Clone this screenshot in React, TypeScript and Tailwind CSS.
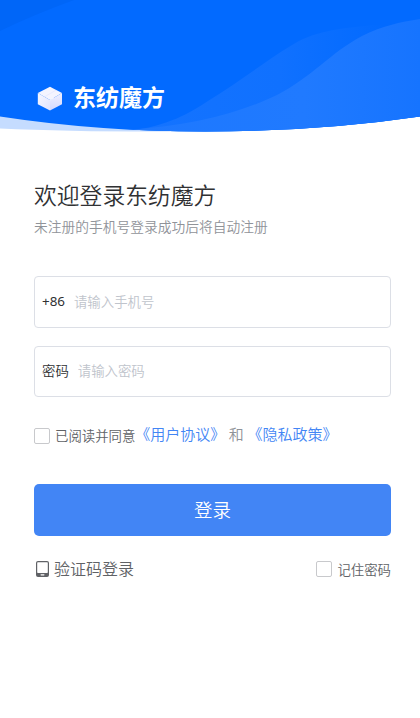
import React, { useState } from 'react';

interface CheckboxProps {
  checked: boolean;
  onChange: (checked: boolean) => void;
  label: string;
}

/**
 * Small square checkbox, the visible label is rendered by the parent.
 */
const Checkbox: React.FC<CheckboxProps> = ({ checked, onChange, label }) => (
  <input
    type="checkbox"
    aria-label={label}
    checked={checked}
    onChange={(e) => onChange(e.target.checked)}
    className="size-4 shrink-0 appearance-none rounded-[2px] border border-[#c8c9cc] bg-white checked:border-[#4285f5] checked:bg-[#4285f5]"
  />
);

/**
 * Blue waves behind the logo.
 */
const HeaderWaves: React.FC = () => (
  <svg className="absolute inset-0 h-full w-full" viewBox="0 0 420 134" preserveAspectRatio="none">
    <defs>
      <linearGradient id="backWave" gradientUnits="userSpaceOnUse" x1="150" y1="0" x2="385" y2="0">
        <stop offset="0" stopColor="#1473ff" />
        <stop offset="0.55" stopColor="#1071ff" />
        <stop offset="1" stopColor="#026aff" />
      </linearGradient>
      <linearGradient id="frontWave" gradientUnits="userSpaceOnUse" x1="130" y1="0" x2="420" y2="0">
        <stop offset="0" stopColor="#1d78ff" />
        <stop offset="0.6" stopColor="#207aff" />
        <stop offset="1" stopColor="#1674ff" />
      </linearGradient>
      <clipPath id="headerShape">
        <path d="M0 0H420V116.5Q318 131.5 205 131.5Q98 131.5 0 116.5Z" />
      </clipPath>
    </defs>
    <path d="M0 115Q65 127 180 131.5Q75 132 0 128.5Z" fill="#c5dcff" />
    <g clipPath="url(#headerShape)">
      <rect width="420" height="134" fill="#026aff" />
      <path d="M0 0H74Q35 14 0 31Z" fill="#0066f8" />
      <path d="M128 131C168 126 190 113 208 101C244 79 280 50 303 39C328 28 355 27 386 24L420 24V134H128Z" fill="url(#backWave)" />
      <path d="M128 130C190 126 240 113 277 95C312 77 330 53 362 36C382 26 400 22 420 19V134H128Z" fill="url(#frontWave)" />
    </g>
  </svg>
);

const CubeLogo: React.FC = () => (
  <svg className="h-[25px] w-[26px]" viewBox="0 0 26 25">
    <defs>
      <linearGradient id="cubeLeft" x1="0" y1="0" x2="1" y2="1">
        <stop offset="0" stopColor="#f8f8ff" />
        <stop offset="1" stopColor="#e0e3ff" />
      </linearGradient>
      <linearGradient id="cubeRight" x1="0" y1="0" x2="0" y2="1">
        <stop offset="0" stopColor="#eff0ff" />
        <stop offset="1" stopColor="#d3d8ff" />
      </linearGradient>
    </defs>
    <path d="M13 0.7L25 7L13 14L0.8 7Z" fill="#f4f4ff" />
    <path d="M0.8 7L13 14V24.6L0.8 18.2Z" fill="url(#cubeLeft)" />
    <path d="M25 7L13 14V24.6L25 18.2Z" fill="url(#cubeRight)" />
    <path d="M8 10.5L19 4.2" stroke="#e4e7ff" strokeWidth="0.8" />
    <path d="M13 14L17 11.6" stroke="#ffffff" strokeWidth="0.8" />
  </svg>
);

const PhoneIcon: React.FC = () => (
  <svg className="h-4 w-[13px]" viewBox="0 0 13 16">
    <rect x="0" y="0" width="13" height="16" rx="2" fill="#606266" />
    <rect x="1.2" y="1.2" width="10.6" height="10.8" rx="0.7" fill="#ffffff" />
    <rect x="4.6" y="13.2" width="3.8" height="1.2" rx="0.3" fill="#ffffff" />
  </svg>
);

const App: React.FC = () => {
  const [phone, setPhone] = useState('');
  const [password, setPassword] = useState('');
  const [agreed, setAgreed] = useState(false);
  const [remember, setRemember] = useState(false);

  return (
    <div className="min-h-[718px] w-full overflow-hidden bg-white font-['Noto_Sans_CJK_SC',sans-serif] font-[350]">
      {/* Header */}
      <header className="relative h-[134px]">
        <HeaderWaves />
        <div className="relative flex items-start pt-[81px] pl-[37px]">
          <div className="pt-[5px]">
            <CubeLogo />
          </div>
          <span className="ml-[10px] text-[23px] leading-[30px] font-bold text-white">东纺魔方</span>
        </div>
      </header>

      <main className="pr-[29px] pl-[34px]">
        <h1 className="pt-[44px] text-[22.8px] leading-[34px] text-[#303133]">欢迎登录东纺魔方</h1>
        <p className="mt-[4px] text-[13.75px] leading-5 text-[#909399]">未注册的手机号登录成功后将自动注册</p>

        {/* Login form */}
        <label className="mt-10 flex h-[52px] items-center rounded-[4px] border border-[#dcdfe6] px-[7px] pb-[2px]">
          <span className="font-['Noto_Sans',sans-serif] text-[13.4px] font-normal text-[#303133]">+86</span>
          <input
            value={phone}
            onChange={(e) => setPhone(e.target.value)}
            placeholder="请输入手机号"
            className="ml-[9px] min-w-0 flex-1 text-[13.4px] outline-none placeholder:text-[#c0c4cc]"
          />
        </label>
        <label className="mt-[18px] flex h-[51px] items-center rounded-[4px] border border-[#dcdfe6] px-[7px] pb-[2px]">
          <span className="text-[13.4px] text-[#303133]">密码</span>
          <input
            type="password"
            value={password}
            onChange={(e) => setPassword(e.target.value)}
            placeholder="请输入密码"
            className="ml-[9px] min-w-0 flex-1 text-[13.4px] outline-none placeholder:text-[#c0c4cc]"
          />
        </label>

        {/* Agreement */}
        <div className="mt-[27px] flex h-6 items-center whitespace-nowrap">
          <Checkbox checked={agreed} onChange={setAgreed} label="同意协议" />
          <span className="ml-[5px] pb-[2px] text-[13.4px] text-[#606266]">已阅读并同意</span>
          <div className="flex pb-[4px] text-[15px]">
            <span className="text-[#4285f5]">《用户协议》</span>
            <span className="mx-[3.5px] text-[#909399]">和</span>
            <span className="text-[#4285f5]">《隐私政策》</span>
          </div>
        </div>

        <button className="mt-9 flex h-[52px] w-full items-center justify-center rounded-[5px] bg-[#4285f5] pb-px text-[18.5px] text-white">
          登录
        </button>

        {/* Bottom row */}
        <div className="mt-[21px] flex h-6 items-center justify-between">
          <button className="flex items-center pl-[2px] text-[16px] leading-6 text-[#606266]">
            <PhoneIcon />
            <span className="ml-[5px] pb-px leading-[21px]">验证码登录</span>
          </button>
          <div className="flex items-center">
            <Checkbox checked={remember} onChange={setRemember} label="记住密码" />
            <span className="ml-[5px] text-[13.4px] text-[#606266]">记住密码</span>
          </div>
        </div>
      </main>
    </div>
  );
};

export default App;
